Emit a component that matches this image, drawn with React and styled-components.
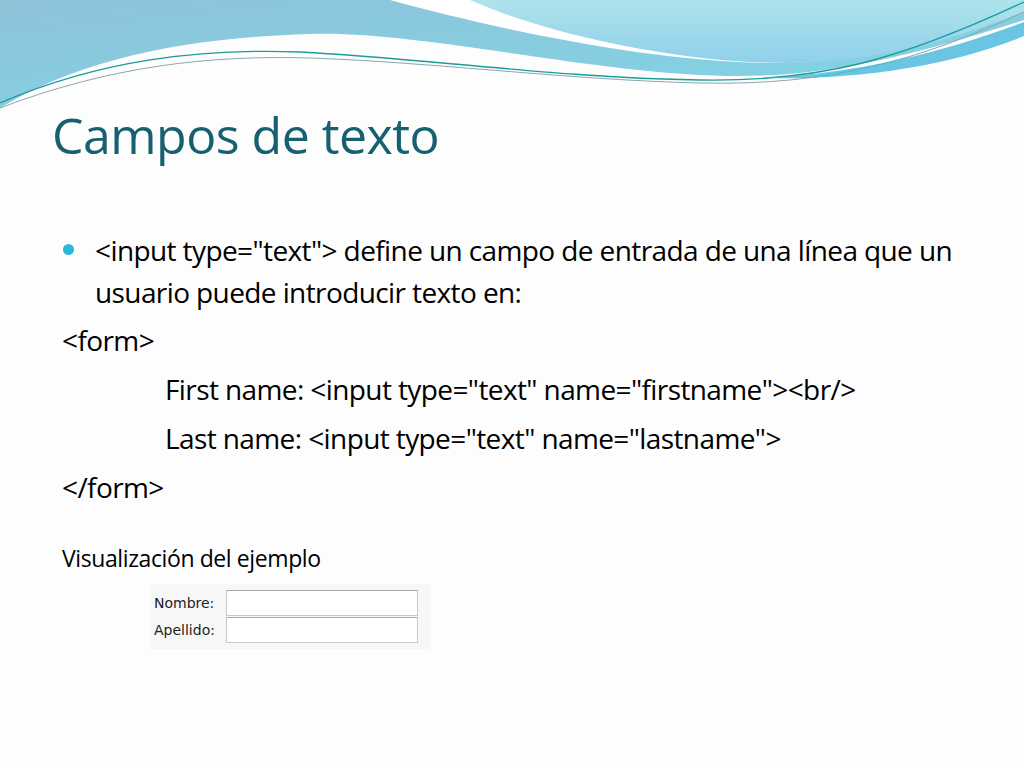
import React from "react";
import styled, { createGlobalStyle } from "styled-components";

const Global = createGlobalStyle`
  body { margin: 0; background: #fff; font-family: "Open Sans", "Noto Sans", sans-serif; }
`;

const Slide = styled.div`
  position: relative;
  width: 1024px;
  height: 768px;
  overflow: hidden;
  background: #fdfdfd;
`;

const Wave = styled.svg`
  position: absolute;
  top: 0;
  left: 0;
`;

const Content = styled.div`
  position: relative;
  padding: 104px 0 0 52px;
`;

const Title = styled.h1`
  margin: 0 0 63px;
  font-weight: 400;
  font-size: 50px;
  line-height: 62px;
  color: #17606f;
  letter-spacing: -0.5px;
`;

const Body = styled.div`
  font-size: 28px;
  line-height: 49px;
  color: #000;
  letter-spacing: -0.6px;
  width: 920px;
`;

const Bullet = styled.div`
  position: relative;
  padding-left: 43px;
  line-height: 42px;
  margin-bottom: 3px;
  &::before {
    content: "";
    position: absolute;
    left: 11px;
    top: 15px;
    width: 11px;
    height: 11px;
    border-radius: 50%;
    background: #2bb7d7;
  }
`;

const Line = styled.div`
  padding-left: ${p => (p.indent ? "113px" : "10px")};
`;

const Caption = styled.div`
  margin-top: 30px;
  padding-left: 10px;
  font-size: 23px;
  letter-spacing: -0.4px;
  color: #000;
`;

const Demo = styled.div`
  margin: 10px 0 0 98px;
  width: 276px;
  padding: 6px 0 6px 4px;
  background: #f7f7f7;
  display: grid;
  grid-template-columns: 72px 192px;
  row-gap: 1px;
  align-items: center;
  font-family: "DejaVu Sans", Verdana, sans-serif;
  font-size: 14px;
  color: #222;
`;

const Field = styled.div`
  height: 24px;
  background: #fff;
  border: 1px solid #c8c8c8;
  border-top-color: #a9a9a9;
`;

export default function App() {
  return (
    <>
      <Global />
      <Slide>
        <Wave width="1024" height="120" viewBox="0 0 1024 120">
          <defs>
            <linearGradient id="g1" x1="0" y1="0" x2="1" y2="1">
              <stop offset="0" stopColor="#8fc3da" />
              <stop offset="1" stopColor="#7fd6e6" />
            </linearGradient>
            <linearGradient id="g2" x1="0" y1="0" x2="0" y2="1">
              <stop offset="0" stopColor="#aee3ea" />
              <stop offset="1" stopColor="#8fd0ec" />
            </linearGradient>
          </defs>
          <path d="M0 0 H1024 V20 C900 60 820 76 740 76 C600 76 420 30 310 34 C180 38 80 60 0 108 Z" fill="url(#g1)" />
          <path d="M230 0 H1024 V10 C930 45 850 64 770 63 C650 62 500 30 390 0 Z" fill="#fff" />
          <path d="M250 0 H1024 V12 C950 40 880 62 790 63 C700 64 560 40 470 0 Z" fill="url(#g2)" />
          <path d="M0 103 C100 60 200 48 300 52 C420 58 560 78 700 80 C820 82 900 60 1024 2" fill="none" stroke="#1a9c9a" strokeWidth="1.3" />
          <path d="M0 108 C110 66 210 55 310 58 C430 62 570 80 700 83 C830 86 920 60 1024 12" fill="none" stroke="#8aa6b0" strokeWidth="1" />
          <path d="M760 78 C860 74 950 50 1024 22 V36 C950 66 860 80 760 78 Z" fill="#45b6dc" opacity="0.8" />
        </Wave>
        <Content>
          <Title>Campos de texto</Title>
          <Body>
            <Bullet>
              &lt;input type="text"&gt; define un campo de entrada de una línea que un usuario puede introducir texto en:
            </Bullet>
            <Line>&lt;form&gt;</Line>
            <Line indent>First name: &lt;input type="text" name="firstname"&gt;&lt;br/&gt;</Line>
            <Line indent>Last name: &lt;input type="text" name="lastname"&gt;</Line>
            <Line>&lt;/form&gt;</Line>
          </Body>
          <Caption>Visualización del ejemplo</Caption>
          <Demo>
            <span>Nombre:</span>
            <Field />
            <span>Apellido:</span>
            <Field />
          </Demo>
        </Content>
      </Slide>
    </>
  );
}
